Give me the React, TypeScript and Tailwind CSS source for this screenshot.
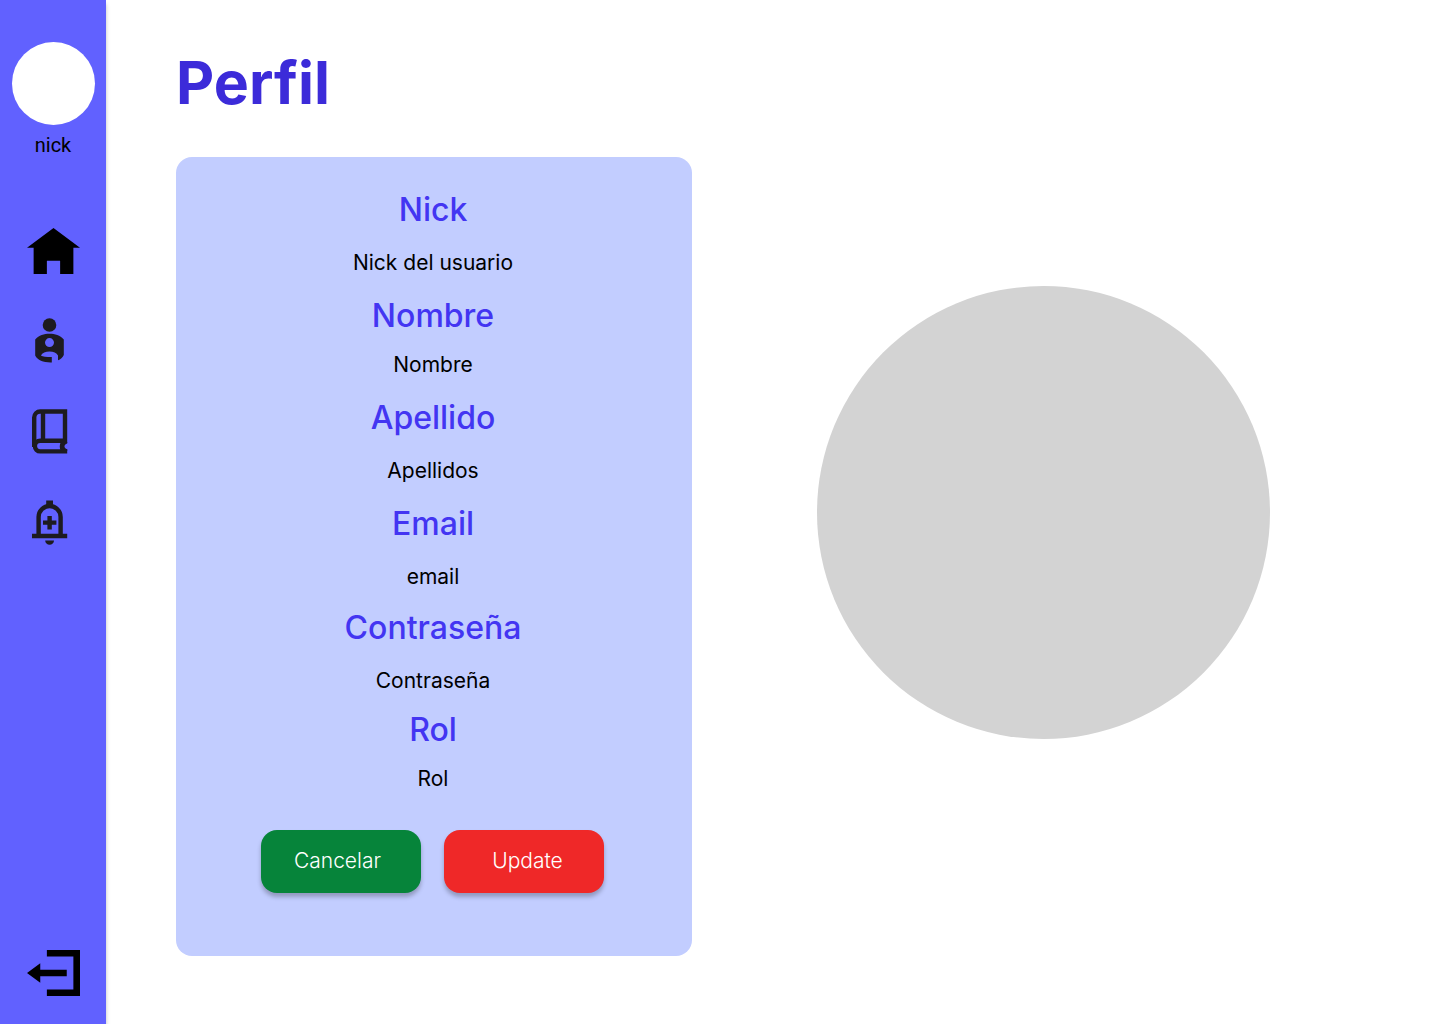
const fields = [
  { label: 'Nick', value: 'Nick del usuario', inner: 'gap-[19px]', outer: 'mb-[19px]' },
  { label: 'Nombre', value: 'Nombre', inner: 'gap-[15px]', outer: 'mb-[19px]' },
  { label: 'Apellido', value: 'Apellidos', inner: 'gap-[19px]', outer: 'mb-[19px]' },
  { label: 'Email', value: 'email', inner: 'gap-[19px]', outer: 'mb-[17px]' },
  { label: 'Contraseña', value: 'Contraseña', inner: 'gap-[19px]', outer: 'mb-[15px]' },
  { label: 'Rol', value: 'Rol', inner: 'gap-[15px]', outer: '' },
];

function HomeIcon() {
  return (
    <svg viewBox="0 0 8 7" className="h-[46px] w-[53px]" preserveAspectRatio="none" fill="#000" aria-hidden="true">
      <path d="M4 0L0 3h1v4h2V5h2v2h2V3h1z" />
    </svg>
  );
}

function ExitIcon() {
  return (
    <svg viewBox="0 0 8 7" className="h-[46px] w-[53px]" preserveAspectRatio="none" fill="#000" aria-hidden="true">
      <path d="M3 0v1h4v5H3v1h5V0H3zM2 2L0 3.5 2 5V4h4V3H2V2z" />
    </svg>
  );
}

function PersonIcon() {
  return (
    <svg viewBox="0 1 36 46" className="h-[46px] w-9 overflow-visible" fill="#1d1b20" aria-hidden="true">
      <circle cx="17.5" cy="7" r="6.8" />
      <path
        fillRule="evenodd"
        d="M17.5 15.800c5.500 0 10.500 1.500 14.300 5.800V37c-1.200 2.700-3.200 4.500-5.800 5.300V37.400c-1.200-2.400-4.600-4-8.500-4s-7.300 1.500-8.600 4c1.800 1.300 5.300 1.700 10.900 1.700v5.300C11.500 44.600 5.700 42.500 3.200 37.500V21.600C7 17.300 12 15.800 17.500 15.800zm0 4.300a4.500 4.500 0 1 0 0 9 4.500 4.500 0 0 0 0-9z"
      />
    </svg>
  );
}

function BookIcon() {
  return (
    <svg viewBox="0 1 36 46" className="h-[46px] w-9 overflow-visible" fill="none" stroke="#1d1b20" strokeWidth="4.400" aria-hidden="true">
      <path d="M35.200 31.800H8.200a5.300 5.300 0 0 0 0 10.600H35.200M33 33V2.500H8.200a6 6 0 0 0-6 6V38M11 2.500V32" />
      <path d="M28.800 33h6.400v1.400c-3.600 1.200-3.600 4.600 0 5.800V42h-6.400c-1.400-3-1.400-6 0-9z" fill="#1d1b20" stroke="none" />
    </svg>
  );
}

function BellIcon() {
  return (
    <svg viewBox="0 1 36 46" className="h-[46px] w-9 overflow-visible" fill="none" stroke="#1d1b20" strokeWidth="4.400" aria-hidden="true">
      <path d="M0 36H35.200M6.600 36V17a11 11 0 0 1 22 0V36M11 22.600H24.400M17.600 16V29.400" />
      <path d="M14.200 .5h6.800v6h-6.800zM13.200 40.400h8.800a4.400 4.400 0 0 1-8.800 0z" fill="#1d1b20" stroke="none" />
    </svg>
  );
}

export default function App() {
  return (
    <div className="flex min-h-screen bg-white font-['Inter',sans-serif] text-black">
      <aside className="flex w-[106px] shrink-0 flex-col items-center bg-[#6161ff] pt-[42px] pb-7 shadow-[0_4px_4px_rgba(0,0,0,0.25)]">
        <div className="size-[83px] rounded-full bg-white" />
        <span className="mt-2 font-['Roboto',sans-serif] text-xl leading-6">nick</span>
        <nav className="mt-[71px] flex flex-col items-start gap-[45px]">
          <a href="#inicio" aria-label="Inicio"><HomeIcon /></a>
          <a href="#perfil" aria-label="Perfil" className="ml-[5px]"><PersonIcon /></a>
          <a href="#cursos" aria-label="Cursos" className="ml-[5px]"><BookIcon /></a>
          <a href="#avisos" aria-label="Avisos" className="ml-[5px]"><BellIcon /></a>
        </nav>
        <a href="#salir" aria-label="Salir" className="mt-auto"><ExitIcon /></a>
      </aside>
      <main className="flex flex-1 flex-col pt-12 pr-[45px] pb-[68px] pl-[70px]">
        <h1 className="text-[59px] leading-[70px] font-bold text-[#3c2bd9]">Perfil</h1>
        <div className="mt-[39px] flex flex-1 items-start">
          <section className="flex w-[516px] shrink-0 flex-col items-center rounded-2xl bg-[#c2cdff] pt-[33px] pr-0.5 pb-[63px]">
            <dl className="text-center">
              {fields.map((f) => (
                <div key={f.label} className={`flex flex-col ${f.inner} ${f.outer}`}>
                  <dt className="text-[32px] leading-10 font-medium text-[#4335f2]">{f.label}</dt>
                  <dd className="text-[21px] leading-7">{f.value}</dd>
                </div>
              ))}
            </dl>
            <div className="mt-[37px] flex gap-[23px] pr-0.5 text-[21px] font-light text-white">
              <button type="button" className="h-[63px] w-40 rounded-2xl bg-[#06843a] pr-1.5 pb-0.5 shadow-[0_4px_4px_rgba(0,0,0,0.25)]">Cancelar</button>
              <button type="button" className="h-[63px] w-40 rounded-2xl bg-[#ef2828] pb-0.5 pl-2 shadow-[0_4px_4px_rgba(0,0,0,0.25)]">Update</button>
            </div>
          </section>
          <div className="flex flex-1 justify-center pt-[129px]">
            <div className="size-[453px] rounded-full bg-[#d3d3d3]" />
          </div>
        </div>
      </main>
    </div>
  );
}
